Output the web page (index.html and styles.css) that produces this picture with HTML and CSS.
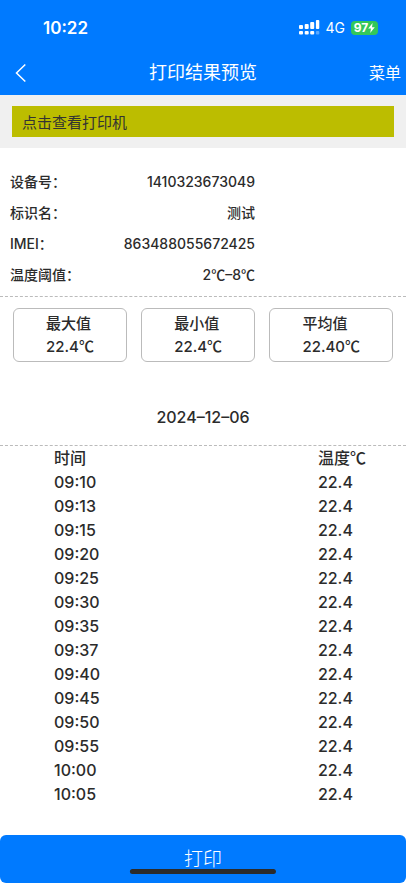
FILE: index.html
```html
<!DOCTYPE html>
<html lang="zh-CN">
<head>
<meta charset="utf-8">
<meta name="viewport" content="width=device-width, initial-scale=1">
<title>打印结果预览</title>
<link rel="stylesheet" href="styles.css">
</head>
<body>
<header class="top">
  <div class="status">
    <span class="clock">10:22</span>
    <div class="indicators">
      <svg class="signal" width="21" height="15" viewBox="0 0 21 15" aria-hidden="true">
        <g fill="#fff">
          <rect x="0" y="5" width="4" height="4" rx="1"/>
          <rect x="5.7" y="4" width="4" height="5" rx="1"/>
          <rect x="11.2" y="2" width="4" height="7" rx="1"/>
          <rect x="16.9" y="0" width="3.4" height="9" rx="1"/>
          <rect x="0" y="11" width="4" height="3.4" rx="1"/>
          <rect x="5.7" y="11" width="4" height="3.4" rx="1"/>
          <rect x="11.2" y="11" width="4" height="3.4" rx="1"/>
          <rect x="16.9" y="11" width="3.4" height="3.4" rx="1" opacity=".35"/>
        </g>
      </svg>
      <span class="network">4G</span>
      <span class="battery">97<svg width="7" height="10" viewBox="0 0 7 10" aria-hidden="true"><path d="M4.6 0 0.2 5.6H3L2.2 10 6.8 4.2H4Z" fill="#fff"/></svg></span>
    </div>
  </div>
  <nav class="nav">
    <a class="back" href="#" aria-label="返回"><svg width="12" height="20" viewBox="0 0 12 20" aria-hidden="true"><path d="M10.3 1.5 1.5 10l8.8 8.5" fill="none" stroke="#fff" stroke-width="1.5"/></svg></a>
    <h1 class="title">打印结果预览</h1>
    <a class="menu" href="#">菜单</a>
  </nav>
</header>
<main class="main">
  <div class="notice"><button class="printer" type="button">点击查看打印机</button></div>
  <dl class="info">
    <div class="info-row"><dt>设备号：</dt><dd>1410323673049</dd></div>
    <div class="info-row"><dt>标识名：</dt><dd>测试</dd></div>
    <div class="info-row"><dt>IMEI：</dt><dd>863488055672425</dd></div>
    <div class="info-row"><dt>温度阈值：</dt><dd>2<span class="unit">℃</span>–8<span class="unit">℃</span></dd></div>
  </dl>
  <section class="stats">
    <div class="stat"><div>最大值</div><div>22.4<span class="unit">℃</span></div></div>
    <div class="stat"><div>最小值</div><div>22.4<span class="unit">℃</span></div></div>
    <div class="stat"><div>平均值</div><div>22.40<span class="unit">℃</span></div></div>
  </section>
  <h2 class="date">2024–12–06</h2>
  <table class="records">
    <thead><tr><th>时间</th><th>温度<span class="unit">℃</span></th></tr></thead>
    <tbody>
      <tr><td>09:10</td><td>22.4</td></tr>
      <tr><td>09:13</td><td>22.4</td></tr>
      <tr><td>09:15</td><td>22.4</td></tr>
      <tr><td>09:20</td><td>22.4</td></tr>
      <tr><td>09:25</td><td>22.4</td></tr>
      <tr><td>09:30</td><td>22.4</td></tr>
      <tr><td>09:35</td><td>22.4</td></tr>
      <tr><td>09:37</td><td>22.4</td></tr>
      <tr><td>09:40</td><td>22.4</td></tr>
      <tr><td>09:45</td><td>22.4</td></tr>
      <tr><td>09:50</td><td>22.4</td></tr>
      <tr><td>09:55</td><td>22.4</td></tr>
      <tr><td>10:00</td><td>22.4</td></tr>
      <tr><td>10:05</td><td>22.4</td></tr>
    </tbody>
  </table>
</main>
<footer class="footer">
  <button class="print" type="button">打印</button>
  <span class="home-bar"></span>
</footer>
</body>
</html>
```

FILE: styles.css
```css
* {
  box-sizing: border-box;
}

body {
  margin: 0;
  min-height: 100vh;
  display: flex;
  flex-direction: column;
  background: #fff;
  color: #2b2b2b;
  font-family: Inter, "Noto Sans CJK SC", sans-serif;
  font-size: 16px;
  font-weight: 500;
}

h1,
h2,
dl,
dd {
  margin: 0;
  font-weight: inherit;
}

button {
  border: 0;
  font-family: inherit;
}

a {
  color: inherit;
  text-decoration: none;
}

.unit {
  font-family: "Noto Sans CJK SC", sans-serif;
  line-height: 1;
}

.top {
  background: #007aff;
  color: #fff;
}

.status {
  display: flex;
  justify-content: space-between;
  align-items: center;
  height: 50px;
  padding: 5px 28px 0 43px;
}

.clock {
  font-size: 17px;
  font-weight: 600;
}

.indicators {
  display: flex;
  align-items: center;
  gap: 6px;
}

.network {
  font-size: 14px;
  font-weight: 400;
}

.battery {
  display: flex;
  align-items: center;
  justify-content: center;
  width: 27px;
  height: 14px;
  border-radius: 4px;
  background: #34c759;
  font-size: 12px;
  font-weight: 700;
}

.nav {
  display: grid;
  grid-template-columns: 1fr auto 1fr;
  align-items: center;
  height: 45px;
  font-weight: 400;
}

.back {
  display: flex;
  padding-left: 15px;
}

.title {
  font-size: 18px;
  font-weight: 400;
  line-height: 24px;
}

.menu {
  justify-self: end;
  padding-right: 5px;
  font-size: 16px;
  line-height: 24px;
}

.main {
  flex: 1;
}

.notice {
  padding: 11px 12px;
  background: #f0f0f0;
}

.printer {
  display: block;
  width: 100%;
  height: 31px;
  padding: 0 10px;
  background: #bcbd00;
  color: #333;
  font-size: 15px;
  text-align: left;
}

.info {
  padding: 18px 10px 6px;
  border-bottom: 1px dashed #bbb;
}

.info-row {
  display: flex;
  justify-content: space-between;
  width: 64%;
  padding-right: 2px;
  font-size: 14px;
  line-height: 31px;
}

.stats {
  display: flex;
  justify-content: space-between;
  padding: 11px 13px 0;
}

.stat {
  padding: 3px 32px;
  border: 1px solid #bbb;
  border-radius: 6px;
  font-size: 15px;
  line-height: 23px;
}

.date {
  padding: 43px 0 16px;
  border-bottom: 1px dashed #bbb;
  font-size: 16px;
  line-height: 24px;
  text-align: center;
}

.records {
  width: 100%;
  border-collapse: collapse;
  table-layout: fixed;
  line-height: 24px;
}

.records th,
.records td {
  height: 24px;
  padding: 0 0 0 54px;
  font-weight: 500;
  text-align: left;
}

.records th:first-child,
.records td:first-child {
  width: 65%;
}

.footer {
  position: relative;
}

.print {
  display: block;
  width: 100%;
  height: 48px;
  padding: 0 0 4px;
  border-radius: 6px;
  background: #007aff;
  color: #fff;
  font-size: 19px;
  font-weight: 300;
}

.home-bar {
  position: absolute;
  bottom: 9px;
  left: 50%;
  width: 36%;
  height: 5px;
  border-radius: 3px;
  background: #2b2b2b;
  transform: translateX(-50%);
}
```
